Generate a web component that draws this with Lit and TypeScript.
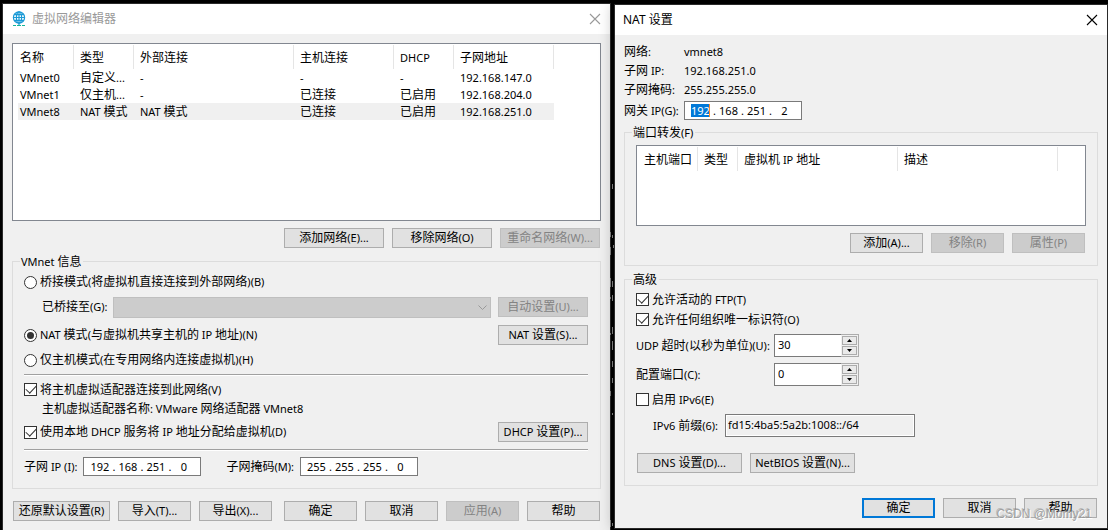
import { LitElement, html, css, svg, nothing } from "lit";
import { customElement } from "lit/decorators.js";

const CJK = /([\u3000-\u9fff]+)/;

/** Dialog text: Latin runs use the small UI face, Chinese runs the 12px one. */
const t = (text: string) => html`<span class="t">${text
  .split(CJK)
  .filter((s) => s)
  .map((s) => (CJK.test(s) ? html`<span class="cjk">${s}</span>` : s))}</span>`;

const button = (text: string, size: string, state = "") => html`<button
  type="button"
  class="btn ${size} ${state}"
  ?disabled=${state === "off"}
>${t(text)}</button>`;

const closeButton = () => html`<button type="button" class="close" aria-label="关闭">
  <svg width="12" height="12" viewBox="0 0 12 12" aria-hidden="true">
    <path d="M1 1 L11 11 M11 1 L1 11" fill="none" stroke="currentColor" stroke-width="1.1" />
  </svg>
</button>`;

const ipField = (id: string, label: string, parts: string[], selected = -1) => html`<div
  class="ip" role="group" aria-labelledby=${id}
>${parts.map(
  (p, i) => html`${i ? html`<span class="dot">.</span>` : nothing}<input
    type="text"
    class="octet ${i === selected ? "selected" : ""}"
    aria-label="${label} ${i + 1}"
    .value=${p}
  />`
)}</div>`;

const table = (label: string, cols: [string, number][], rows: string[][], active = -1) => html`<div class="list">
  <table aria-label=${label}>
    <colgroup>${cols.map(([, w]) => html`<col style="width:${w}px" />`)}</colgroup>
    <thead><tr>${cols.map(([c]) => html`<th>${t(c)}</th>`)}</tr></thead>
    <tbody>${rows.map(
      (r, i) => html`<tr class=${i === active ? "active" : ""}>${r.map((c) => html`<td>${t(c)}</td>`)}</tr>`
    )}</tbody>
  </table>
</div>`;

const spinner = (id: string, value: string) => html`<div class="spin">
  <input id=${id} type="text" inputmode="numeric" .value=${value} />
  <span class="arrows">
    <button type="button" aria-label="增加"><svg width="5" height="3" viewBox="0 0 5 3"><path d="M0 3H5L2.5 0Z" /></svg></button>
    <button type="button" aria-label="减少"><svg width="5" height="3" viewBox="0 0 5 3"><path d="M0 0H5L2.5 3Z" /></svg></button>
  </span>
</div>`;

/** Bits of console output that show between the two dialogs. */
const consoleMarks = [
  [2, 184, 5], [0, 232, 5], [2, 235, 3], [0, 247, 8], [3, 245, 3], [0, 278, 9], [2, 281, 6],
  [0, 297, 2], [2, 295, 6], [2, 327, 7], [0, 333, 2], [2, 341, 9], [2, 361, 6], [2, 378, 5],
  [0, 391, 5], [2, 413, 2], [0, 520, 7], [2, 523, 3],
];

@customElement("app-root")
export class AppRoot extends LitElement {
  static styles = css`
    :host {
      display: block;
      min-height: 100vh;
      background: #000;
      color: #000;
      font: 11px/16px "Noto Sans", "Noto Sans CJK SC", sans-serif;
    }
    * { box-sizing: border-box; }
    .desk {
      display: grid;
      grid-template-columns: 609fr 3px 494fr;
      min-height: 100vh;
      padding-left: 2px;
    }
    .window {
      display: flex;
      flex-direction: column;
      min-width: 0;
      background: #f0f0f0;
      border: 1px solid #2a2a2a;
    }
    .editor { margin-top: 3px; border-bottom: 0; }
    .nat {
      position: relative;
      z-index: 1;
      align-self: start;
      margin-top: 4px;
      box-shadow: 0 0 14px rgba(0, 0, 0, 0.3);
    }
    .marks { display: block; width: 4px; height: 530px; overflow: visible; z-index: 2; }
    .title {
      display: flex;
      align-items: center;
      height: 30px;
      padding: 0 9px 0 8px;
      background: #fff;
      font-size: 12px;
    }
    .title h1 { flex: 1; margin: 0; font: inherit; }
    .editor .title { color: #999; }
    .globe { margin-right: 5px; }
    .close { display: flex; padding: 0; border: 0; background: none; color: inherit; }
    .body { padding: 9px; }
    .nat .body { padding: 7px 9px 10px; }

    .t { white-space: pre; }
    .cjk { font-family: "Noto Sans CJK SC", sans-serif; font-size: 12px; line-height: 1; }

    .list { height: 178px; border: 1px solid #828790; background: #fff; overflow: hidden; padding: 1px; }
    table { table-layout: fixed; width: 0; border-collapse: separate; border-spacing: 0; }
    th, td {
      padding: 0 0 0 6px;
      font-weight: 400;
      text-align: left;
      overflow: hidden;
      text-overflow: ellipsis;
      white-space: nowrap;
    }
    th { height: 24px; padding-top: 2px; border-right: 1px solid #e5e5e5; }
    td { height: 17px; line-height: 17px; }
    td:first-child { border-left: 4px solid #fff; padding-left: 2px; }
    .active td { background: #f0f0f0; }

    .btn {
      height: 20px;
      padding: 0;
      flex: none;
      border: 1px solid #adadad;
      border-radius: 0;
      background: #e1e1e1;
      color: #000;
      font: inherit;
      line-height: 16px;
      text-align: center;
      white-space: nowrap;
    }
    .btn.off { background: #ccc; border-color: #bfbfbf; color: #838383; }
    .btn.main { border: 2px solid #0078d7; line-height: 14px; }
    .w73 { width: 73px; }
    .w90 { width: 90px; }
    .w97 { width: 97px; }
    .w100 { width: 100px; }
    .w105 { width: 105px; }
    .bar { display: flex; gap: 8px; justify-content: flex-end; }
    .bar.top { margin: 7px 1px 6px 0; }
    .bar.foot { margin: 12px 1px 0; }
    .bar.foot .gap { margin-right: 4px; }

    fieldset { display: block; min-width: 0; margin: 0; border: 1px solid #dcdcdc; padding: 0 11px 6px; }
    .nat fieldset { padding-bottom: 12px; }
    legend { height: 15px; margin-left: -4px; padding: 0 2px 0 1px; line-height: 15px; }
    .row { display: flex; align-items: center; justify-content: space-between; padding-right: 1px; }
    .h12 { height: 12px; }
    .h18 { height: 18px; }
    .h24 { height: 24px; }
    .h26 { height: 26px; }
    .h27 { height: 27px; }
    .h31 { height: 31px; }
    .h32 { height: 32px; }
    .h34 { height: 34px; }
    .indent { padding-left: 18px; }
    .choice { display: flex; align-items: center; gap: 3px; }
    .choice input {
      appearance: none;
      flex: none;
      display: grid;
      place-items: center;
      width: 13px;
      height: 13px;
      margin: 0;
      border: 1px solid #333;
      background: #fff;
    }
    .choice input[type="radio"] { border-radius: 50%; }
    .choice input[type="radio"]:checked::before {
      content: "";
      width: 7px;
      height: 7px;
      border-radius: 50%;
      background: #333;
    }
    .choice input[type="checkbox"]:checked::before {
      content: "";
      width: 9px;
      height: 5px;
      margin-bottom: 3px;
      border: solid #333;
      border-width: 0 0 1px 1px;
      transform: rotate(-47deg);
    }
    .combo { position: relative; flex: 1; margin: 0 7px 0 5px; height: 21px; }
    .combo select {
      appearance: none;
      display: block;
      width: 100%;
      height: 21px;
      border: 1px solid #bfbfbf;
      border-radius: 0;
      background: #ccc;
      opacity: 1;
    }
    .combo svg { position: absolute; right: 4px; top: 8px; }
    hr { height: 2px; margin: 0 1px 0 0; border: 0; border-top: 1px solid #a0a0a0; background: #fff; }
    .after { margin-top: 5px; }

    .ip {
      display: flex;
      align-items: center;
      width: 118px;
      height: 19px;
      padding-left: 3px;
      flex: none;
      border: 1px solid #7a7a7a;
      background: #fff;
    }
    .octet { width: 25px; padding: 0; border: 0; background: none; font: inherit; text-align: center; outline: 0; }
    .octet.selected {
      width: 19px;
      height: 13px;
      margin: 0 3px;
      background: #0078d7;
      color: #fff;
      line-height: 13px;
      border-right: 1px solid #ff8728;
    }
    .dot { width: 3px; }
    .subnet { justify-content: flex-start; gap: 6px; }
    .subnet .second { margin-left: 19px; }

    .info {
      display: grid;
      grid-template-columns: 60px 1fr;
      grid-template-rows: repeat(3, 19px) 21px;
      align-items: center;
      margin: 0 0 5px;
    }
    .info dt, .info dd { margin: 0; }
    .info .edit { padding-top: 2px; }
    .ports { margin-bottom: 6px; }
    .ports .list { height: 81px; margin-top: 5px; }
    .ports .bar { margin: 7px 1px 0 0; }

    .opt1 { height: 25px; }
    .opt2 { height: 15px; }
    .opt3 { height: 13px; margin-top: 7px; }
    .form { display: grid; grid-template-columns: 138px 1fr; grid-auto-rows: 23px; row-gap: 6px; margin-top: 7px; align-items: center; }
    .spin { display: flex; width: 85px; height: 23px; border: 1px solid #acacac; background: #f0f0f0; }
    .spin input {
      width: 67px;
      height: 23px;
      margin: -1px 0 -1px -1px;
      padding: 0 0 2px 3px;
      border: 1px solid #7a7a7a;
      border-right: 0;
      border-radius: 0;
      background: #fff;
      font: inherit;
      outline: 0;
    }
    .arrows { display: grid; gap: 1px; padding: 1px; flex: 1; }
    .arrows button {
      display: grid;
      place-items: center;
      padding: 0;
      border: 1px solid #acacac;
      background: #eaeaea;
    }
    .prefix { display: flex; align-items: center; gap: 7px; margin-top: 8px; padding-left: 17px; }
    .prefix input {
      width: 190px;
      height: 23px;
      padding: 0 0 2px 2px;
      border: 1px solid #7a7a7a;
      border-radius: 0;
      background: #f0f0f0;
      box-shadow: inset 0 0 0 1px #fff;
      font: inherit;
      outline: 0;
    }
    .bar.more { justify-content: flex-start; margin: 16px 0 0 1px; }
    .mark {
      position: absolute;
      right: 15px;
      bottom: 6px;
      color: rgba(150, 150, 150, 0.85);
      font: 12px/16px "Liberation Sans", sans-serif;
      text-shadow: 1px 1px 0 #fff, -1px -1px 0 rgba(110, 110, 110, 0.35);
      pointer-events: none;
    }
  `;

  render() {
    return html`<main class="desk">${this.editor()}
      <svg class="marks" viewBox="0 0 4 530" aria-hidden="true">
        ${consoleMarks.map(([x, y, h]) => svg`<rect x=${x - 1} y=${y} width="1" height=${h} fill="#777" />`)}
      </svg>
      ${this.nat()}</main>`;
  }

  private editor() {
    return html`<section class="window editor">
      <header class="title">
        <svg class="globe" width="16" height="16" viewBox="0 0 16 16" fill="none" stroke="#1b9ad6" stroke-width="1.2" aria-hidden="true">
          <circle cx="8" cy="6.5" r="5.6" />
          <ellipse cx="8" cy="6.5" rx="2.6" ry="5.6" />
          <path d="M2.4 6.5H13.6M3.2 3.6H12.8M3.2 9.4H12.8M8 1V14" />
          <path d="M2 14.5H5M6 14.5H10M11 14.5H14" stroke="#12b59b" />
        </svg>
        <h1>${t("虚拟网络编辑器")}</h1>
        ${closeButton()}
      </header>
      <div class="body">
        ${table(
          "虚拟网络",
          [["名称", 60], ["类型", 60], ["外部连接", 160], ["主机连接", 100], ["DHCP", 60], ["子网地址", 100]],
          [
            ["VMnet0", "自定义...", "-", "-", "-", "192.168.147.0"],
            ["VMnet1", "仅主机...", "-", "已连接", "已启用", "192.168.204.0"],
            ["VMnet8", "NAT 模式", "NAT 模式", "已连接", "已启用", "192.168.251.0"],
          ],
          2
        )}
        <div class="bar top">
          ${button("添加网络(E)...", "w100")}${button("移除网络(O)", "w100")}${button("重命名网络(W)...", "w100", "off")}
        </div>
        <fieldset>
          <legend>${t("VMnet 信息")}</legend>
          <div class="row h26">
            <label class="choice"><input type="radio" name="mode" />${t("桥接模式(将虚拟机直接连接到外部网络)(B)")}</label>
          </div>
          <div class="row h24 indent">
            <label for="bridge">${t("已桥接至(G):")}</label>
            <div class="combo">
              <select id="bridge" disabled></select>
              <svg width="9" height="6" viewBox="0 0 9 6" aria-hidden="true"><path d="M.5 .5L4.5 4.5L8.5 .5" fill="none" stroke="#999" /></svg>
            </div>
            ${button("自动设置(U)...", "w90", "off")}
          </div>
          <div class="row h32">
            <label class="choice"><input type="radio" name="mode" checked />${t("NAT 模式(与虚拟机共享主机的 IP 地址)(N)")}</label>
            ${button("NAT 设置(S)...", "w90")}
          </div>
          <div class="row h18">
            <label class="choice"><input type="radio" name="mode" />${t("仅主机模式(在专用网络内连接虚拟机)(H)")}</label>
          </div>
          <hr class="after" />
          <div class="row h27">
            <label class="choice"><input type="checkbox" checked />${t("将主机虚拟适配器连接到此网络(V)")}</label>
          </div>
          <div class="row h12 indent">${t("主机虚拟适配器名称: VMware 网络适配器 VMnet8")}</div>
          <div class="row h34">
            <label class="choice"><input type="checkbox" checked />${t("使用本地 DHCP 服务将 IP 地址分配给虚拟机(D)")}</label>
            ${button("DHCP 设置(P)...", "w90")}
          </div>
          <hr />
          <div class="row h31 subnet">
            <span id="subnet">${t("子网 IP (I):")}</span>${ipField("subnet", "子网 IP", ["192", "168", "251", "0"])}
            <span id="mask" class="second">${t("子网掩码(M):")}</span>${ipField("mask", "子网掩码", ["255", "255", "255", "0"])}
          </div>
        </fieldset>
        <div class="bar foot">
          ${button("还原默认设置(R)", "w97")}${button("导入(T)...", "w73")}${button("导出(X)...", "w73", "gap")}
          ${button("确定", "w73")}${button("取消", "w73")}${button("应用(A)", "w73", "off")}${button("帮助", "w73")}
        </div>
      </div>
    </section>`;
  }

  private nat() {
    return html`<section class="window nat">
      <header class="title"><h1>${t("NAT 设置")}</h1>${closeButton()}</header>
      <div class="body">
        <dl class="info">
          <dt>${t("网络:")}</dt><dd>${t("vmnet8")}</dd>
          <dt>${t("子网 IP:")}</dt><dd>${t("192.168.251.0")}</dd>
          <dt>${t("子网掩码:")}</dt><dd>${t("255.255.255.0")}</dd>
          <dt id="gateway" class="edit">${t("网关 IP(G):")}</dt>
          <dd class="edit">${ipField("gateway", "网关 IP", ["192", "168", "251", "2"], 0)}</dd>
        </dl>
        <fieldset class="ports">
          <legend>${t("端口转发(F)")}</legend>
          ${table("端口转发", [["主机端口", 60], ["类型", 40], ["虚拟机 IP 地址", 160], ["描述", 160]], [])}
          <div class="bar">${button("添加(A)...", "w73")}${button("移除(R)", "w73", "off")}${button("属性(P)", "w73", "off")}</div>
        </fieldset>
        <fieldset>
          <legend>${t("高级")}</legend>
          <label class="choice opt1"><input type="checkbox" checked />${t("允许活动的 FTP(T)")}</label>
          <label class="choice opt2"><input type="checkbox" checked />${t("允许任何组织唯一标识符(O)")}</label>
          <div class="form">
            <label for="udp">${t("UDP 超时(以秒为单位)(U):")}</label>${spinner("udp", "30")}
            <label for="port">${t("配置端口(C):")}</label>${spinner("port", "0")}
          </div>
          <label class="choice opt3"><input type="checkbox" />${t("启用 IPv6(E)")}</label>
          <div class="prefix">
            <label for="prefix">${t("IPv6 前缀(6):")}</label>
            <input id="prefix" type="text" readonly .value=${"fd15:4ba5:5a2b:1008::/64"} />
          </div>
          <div class="bar more">${button("DNS 设置(D)...", "w105")}${button("NetBIOS 设置(N)...", "w105")}</div>
        </fieldset>
        <div class="bar foot">${button("确定", "w73", "main")}${button("取消", "w73")}${button("帮助", "w73")}</div>
      </div>
      <span class="mark">CSDN @Momy21</span>
    </section>`;
  }
}
